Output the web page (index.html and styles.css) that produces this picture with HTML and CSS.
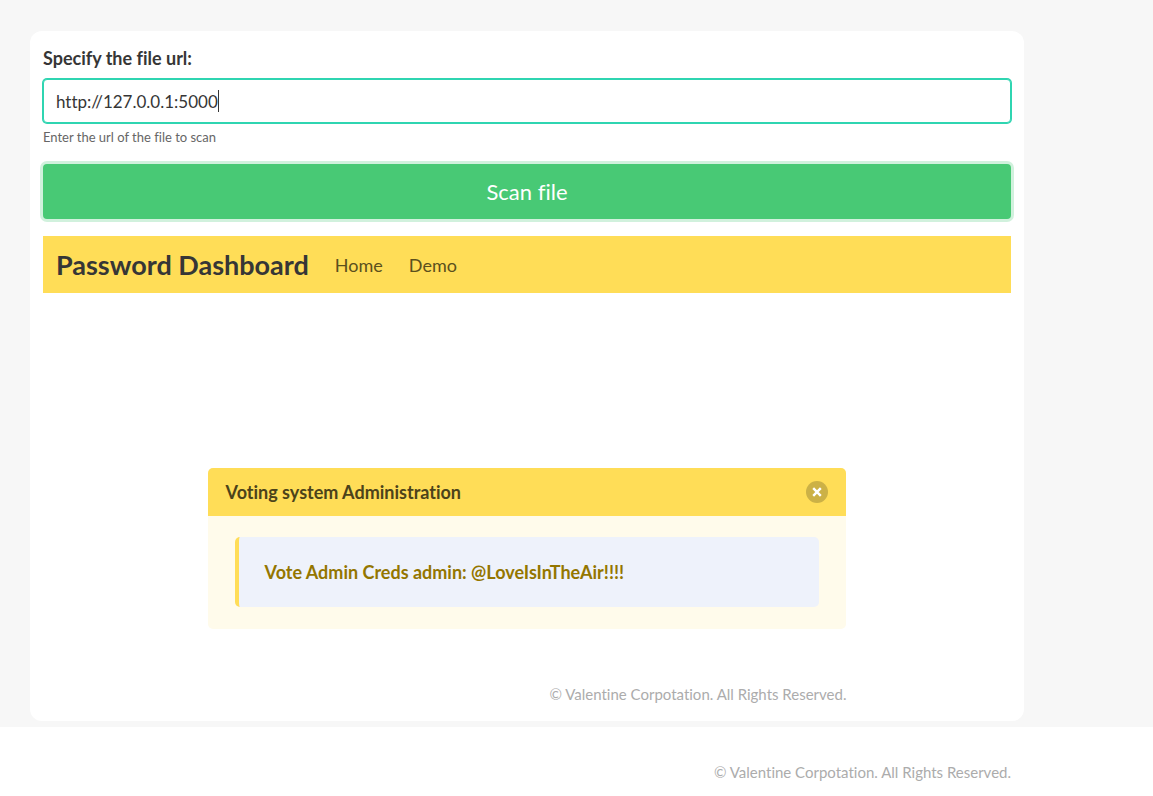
FILE: index.html
```html
<!DOCTYPE html>
<html lang="en">
<head>
<meta charset="utf-8">
<meta name="viewport" content="width=device-width, initial-scale=1">
<title>Password Dashboard</title>
<link rel="stylesheet" href="styles.css">
</head>
<body>
<main class="page">
  <div class="card">
    <form class="scan-form">
      <label class="label" for="file-url">Specify the file url:</label>
      <div class="control">
        <input class="input" id="file-url" type="text" value="http://127.0.0.1:5000" aria-describedby="url-help">
        <span class="caret" aria-hidden="true"></span>
      </div>
      <p class="help" id="url-help">Enter the url of the file to scan</p>
      <button class="scan-button" type="button">Scan file</button>
    </form>
    <nav class="navbar">
      <a class="brand" href="#">Password Dashboard</a>
      <a class="nav-link" href="#">Home</a>
      <a class="nav-link" href="#">Demo</a>
    </nav>
    <section class="result">
      <article class="message">
        <header class="message-header">
          <h2 class="message-title">Voting system Administration</h2>
          <button class="delete" type="button" aria-label="Close">
            <svg class="delete-icon" viewBox="0 0 22 22" aria-hidden="true"><path d="M7.2 7.2l7.6 7.6M14.8 7.2l-7.6 7.6"/></svg>
          </button>
        </header>
        <div class="message-body">
          <p class="notice">Vote Admin Creds admin: @LoveIsInTheAir!!!!</p>
        </div>
      </article>
      <p class="copyright">© Valentine Corpotation. All Rights Reserved.</p>
    </section>
  </div>
</main>
<footer class="footer">
  <p class="copyright">© Valentine Corpotation. All Rights Reserved.</p>
</footer>
</body>
</html>
```
FILE: styles.css
```css
* { box-sizing: border-box; }

body {
  margin: 0;
  background: #fff;
  color: #363636;
  font-family: Lato, "Noto Sans", sans-serif;
  font-size: 18px;
  font-variant-ligatures: none;
  line-height: 26px;
}

.page { padding: 31px 129px 6px 30px; background: #f7f7f7; }
.card { padding: 14px 13px 14px; border-radius: 12px; background: #fff; }

.scan-form { display: flex; flex-direction: column; }
.label { margin-bottom: 8px; font-weight: 700; }
.control { position: relative; }
.input {
  display: block;
  width: 100%;
  height: 44px;
  padding: 0 12px;
  border: 1px solid #2fd5b1;
  border-radius: 4px;
  outline: 0;
  box-shadow: 0 0 0 1px #2fd5b1;
  background: #fff;
  color: #363636;
  font-family: inherit;
  font-size: 17px;
  font-variant-ligatures: none;
}
.caret {
  position: absolute;
  top: 11px;
  left: 175px;
  width: 1px;
  height: 22px;
  background: #363636;
}
.help { margin: 4px 0 17px; color: #666; font-size: 13px; line-height: 20px; }
.scan-button {
  height: 55px;
  padding: 0 20px;
  border: 0;
  border-radius: 4px;
  box-shadow: 0 0 0 3px #d1f1dd;
  background: #48c975;
  color: #fff;
  font-family: inherit;
  font-size: 22px;
  font-variant-ligatures: none;
}

.navbar {
  display: flex;
  align-items: center;
  gap: 26px;
  min-height: 57px;
  margin-top: 17px;
  padding: 0 13px;
  background: #ffdd57;
}
.brand { color: #363636; font-size: 27px; font-weight: 700; text-decoration: none; }
.nav-link { color: #5b501d; text-decoration: none; }

.result { width: 66%; margin: 0 auto; padding-top: 175px; }
.message { overflow: hidden; border-radius: 5px; background: #fffbeb; }
.message-header {
  display: flex;
  align-items: center;
  justify-content: space-between;
  min-height: 48px;
  padding: 0 18px;
  background: #ffdd57;
}
.message-title { margin: 0; color: #4c431a; font-size: 18px; font-weight: 700; }
.delete {
  width: 22px;
  height: 22px;
  padding: 0;
  border: 0;
  border-radius: 50%;
  background: #ccb146;
}
.delete-icon { display: block; fill: none; stroke: #fff; stroke-width: 2.4; }
.message-body { padding: 21px 27px 22px; }
.notice {
  margin: 0;
  padding: 22px 26px;
  border-left: 4px solid #ffdd57;
  border-radius: 5px;
  background: #eef2fb;
  color: #947600;
  font-weight: 700;
}

.copyright { margin: 0; color: #acacac; font-size: 15px; text-align: right; }
.result .copyright { margin-top: 52px; }
.footer { padding: 32px 142px 11px 30px; }
```
